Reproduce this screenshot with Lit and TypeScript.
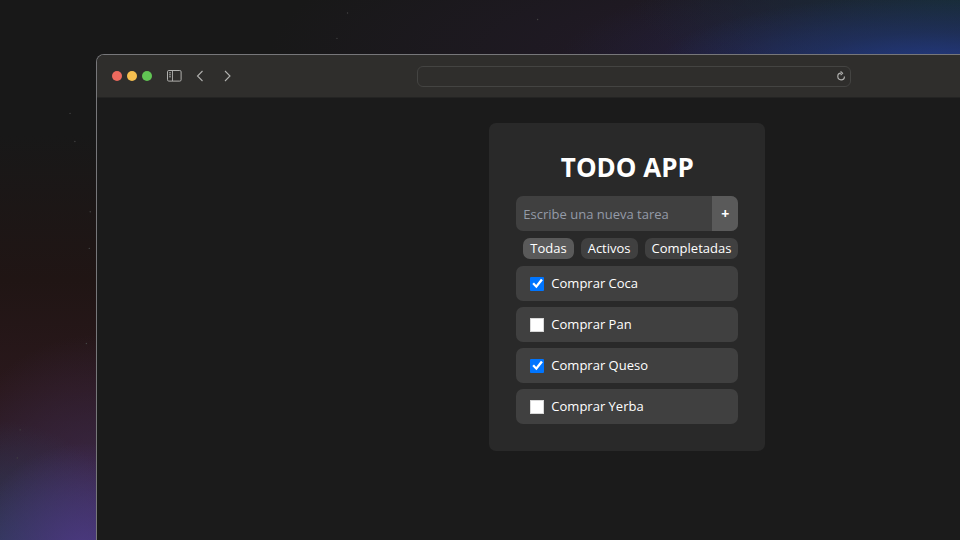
import { LitElement, html, css, svg } from "lit";
import { customElement, state } from "lit/decorators.js";

interface Task {
  id: number;
  text: string;
  done: boolean;
}

type Filter = "Todas" | "Activos" | "Completadas";
const FILTERS: Filter[] = ["Todas", "Activos", "Completadas"];

// Faint specks on the wallpaper, as percentages of its width and height.
const STARS: [number, number][] = [
  [36.2, 2.4], [56, 3.6], [35.1, 7.1], [7.3, 21], [7.8, 26.2],
  [9.4, 39.2], [9.3, 46], [9, 63.6], [2.1, 79.6], [1.8, 84.8],
];

@customElement("todo-card")
export class TodoCard extends LitElement {
  @state() private tasks: Task[] = [
    { id: 1, text: "Comprar Coca", done: true },
    { id: 2, text: "Comprar Pan", done: false },
    { id: 3, text: "Comprar Queso", done: true },
    { id: 4, text: "Comprar Yerba", done: false },
  ];
  @state() private filter: Filter = "Todas";

  static styles = css`
    :host {
      display: block;
      box-sizing: border-box;
      width: 276px;
      padding: 27px;
      border-radius: 7px;
      background: #292929;
      color: #fff;
    }
    h1 {
      margin: 0 0 12px;
      font-size: 26px;
      line-height: 34px;
      font-weight: 700;
      text-align: center;
    }
    .entry {
      display: flex;
      height: 35px;
      border-radius: 7px;
      overflow: hidden;
      background: #404040;
    }
    input,
    button {
      font: inherit;
      color: inherit;
      border: 0;
      margin: 0;
    }
    .field {
      flex: 1;
      min-width: 0;
      padding: 0 7px;
      background: none;
      outline: none;
    }
    .field::placeholder {
      color: #949ba8;
      opacity: 1;
    }
    .add {
      width: 26px;
      padding: 0;
      background: #5a5a5a;
      font-size: 14px;
      font-weight: 700;
    }
    .filters {
      display: flex;
      justify-content: flex-end;
      gap: 7px;
      margin: 7px 0;
    }
    .filter {
      padding: 0 7px;
      line-height: 21px;
      border-radius: 7px;
      background: #404040;
    }
    .filter[aria-pressed="true"] {
      background: #5a5a5a;
    }
    ul {
      display: grid;
      gap: 6px;
      margin: 0;
      padding: 0;
      list-style: none;
    }
    label {
      display: flex;
      align-items: center;
      gap: 7px;
      padding: 7px 14px;
      line-height: 21px;
      border-radius: 7px;
      background: #404040;
    }
    .check {
      appearance: none;
      display: grid;
      place-items: center;
      width: 14px;
      height: 14px;
      border-radius: 1px;
      background: #fff;
      box-shadow: inset 0 0 0 1px #d8d8d8;
    }
    .check:checked {
      background: #0075ff;
      box-shadow: none;
    }
    .check:checked::before {
      content: "";
      width: 12px;
      height: 12px;
      background: #fff;
      clip-path: polygon(8% 54%, 22% 42%, 40% 62%, 80% 10%, 96% 22%, 42% 90%);
    }
  `;

  private toggle(id: number) {
    this.tasks = this.tasks.map((t) => (t.id === id ? { ...t, done: !t.done } : t));
  }

  private add(e: Event) {
    e.preventDefault();
    const field = this.renderRoot.querySelector<HTMLInputElement>(".field")!;
    const text = field.value.trim();
    if (!text) return;
    this.tasks = [...this.tasks, { id: Date.now(), text, done: false }];
    field.value = "";
  }

  render() {
    const shown = this.tasks.filter(
      (t) => this.filter === "Todas" || t.done === (this.filter === "Completadas")
    );
    return html`
      <h1>TODO APP</h1>
      <form class="entry" @submit=${this.add}>
        <input class="field" type="text" aria-label="Nueva tarea" placeholder="Escribe una nueva tarea" />
        <button class="add" type="submit" aria-label="Agregar">+</button>
      </form>
      <div class="filters">
        ${FILTERS.map(
          (f) => html`<button class="filter" type="button"
            aria-pressed=${f === this.filter ? "true" : "false"}
            @click=${() => (this.filter = f)}>${f}</button>`
        )}
      </div>
      <ul>
        ${shown.map(
          (t) => html`<li><label>
            <input class="check" type="checkbox" .checked=${t.done} @change=${() => this.toggle(t.id)} />
            <span>${t.text}</span>
          </label></li>`
        )}
      </ul>
    `;
  }
}

@customElement("app-root")
export class AppRoot extends LitElement {
  static styles = css`
    :host {
      display: flex;
      position: relative;
      box-sizing: border-box;
      min-height: 100vh;
      padding: 54px 0 0 10%;
      overflow: hidden;
      font-family: "Segoe UI", "Open Sans", "Noto Sans", sans-serif;
      font-size: 13px;
      background:
        radial-gradient(ellipse 30% 14% at 98% 13%, #233a86 0%, #22347480 50%, #1f245000 100%),
        radial-gradient(ellipse 34% 20% at 100% 0%, #182c36 0%, #182c3600 100%),
        radial-gradient(ellipse 36% 18% at 94% 12%, #22305f 0%, #22244c80 50%, #20203000 100%),
        radial-gradient(ellipse 50% 26% at 78% 10%, #231a2a 0%, #20182000 100%),
        radial-gradient(ellipse 12% 22% at 9% 104%, #4d3a86 0%, #4d3a8600 100%),
        radial-gradient(ellipse 14% 26% at 0% 104%, #2e3b5c 0%, #2e395800 100%),
        radial-gradient(ellipse 16% 32% at 10% 94%, #3c2849 0%, #3c284900 100%),
        linear-gradient(180deg, #181818 0%, #181818 25%, #201514 52%, #2a181c 72%, #2f2233 100%);
    }
    .stars {
      position: absolute;
      inset: 0;
      width: 100%;
      height: 100%;
    }
    .window {
      position: relative;
      box-sizing: border-box;
      flex: none;
      width: 123%;
      border: 1px solid #77777a;
      border-bottom: 0;
      border-radius: 8px 0 0 0;
      overflow: hidden;
      background: #1b1b1b;
    }
    .toolbar {
      display: grid;
      grid-template-columns: 1fr 434px 1fr;
      align-items: center;
      height: 43px;
      padding: 0 1px 0 15px;
      background: #2f2e2c;
      border-bottom: 1px solid #242423;
      box-sizing: border-box;
    }
    .tools {
      display: flex;
      align-items: center;
    }
    .lights {
      display: flex;
      gap: 5px;
      margin-right: 15px;
    }
    .light {
      width: 10px;
      height: 10px;
      border-radius: 50%;
    }
    .close { background: #ed6a5e; }
    .minimize { background: #f5bf4f; }
    .zoom { background: #61c554; }
    .tool {
      display: flex;
      padding: 0;
      border: 0;
      background: none;
    }
    .nav {
      margin-left: 11px;
    }
    .address {
      display: flex;
      align-items: center;
      box-sizing: border-box;
      height: 21px;
      padding: 0 4px;
      border: 1px solid #444442;
      border-radius: 6px;
    }
    .url {
      flex: 1;
      min-width: 0;
      padding: 0;
      border: 0;
      outline: none;
      background: none;
      color: #ddd;
      font: inherit;
    }
    svg {
      display: block;
      fill: none;
      stroke: #b0b0ae;
    }
    main {
      display: flex;
      justify-content: center;
      padding: 25px 0;
    }
  `;

  render() {
    return html`
      <svg class="stars" aria-hidden="true">
        ${STARS.map(
          ([x, y]) => svg`<circle cx="${x}%" cy="${y}%" r="0.7" fill="#444" stroke="none"></circle>`
        )}
      </svg>
      <div class="window">
        <header class="toolbar">
          <div class="tools">
            <div class="lights">
              <span class="light close"></span>
              <span class="light minimize"></span>
              <span class="light zoom"></span>
            </div>
            <button class="tool" type="button" aria-label="Barra lateral">
              <svg width="15" height="12" viewBox="0 0 15 12">
                <rect x="0.5" y="0.5" width="13.6" height="10.6" rx="1.3"></rect>
                <path d="M5.5 .5V11M2 2.8H4M2 4.8H4M2 6.8H4" stroke-width=".9"></path>
              </svg>
            </button>
            <button class="tool nav" type="button" aria-label="Atrás">
              <svg width="16" height="12" viewBox="0 0 16 12">
                <path d="M9.5 1L4.5 6L9.5 11" stroke-width="1.1"></path>
              </svg>
            </button>
            <button class="tool nav" type="button" aria-label="Adelante">
              <svg width="16" height="12" viewBox="0 0 16 12">
                <path d="M5 1L10 6L5 11" stroke-width="1.1"></path>
              </svg>
            </button>
          </div>
          <div class="address">
            <input class="url" type="text" aria-label="Dirección" />
            <button class="tool" type="button" aria-label="Recargar">
              <svg width="10" height="10" viewBox="0 0 10 10">
                <path d="M5 2.2A3.3 3.3 0 1 0 8.4 5.4" stroke-width="1.2"></path>
                <path d="M4.6 .4L6.6 2.3L4.6 4.2" stroke-width="1.1"></path>
              </svg>
            </button>
          </div>
        </header>
        <main><todo-card></todo-card></main>
      </div>
    `;
  }
}
